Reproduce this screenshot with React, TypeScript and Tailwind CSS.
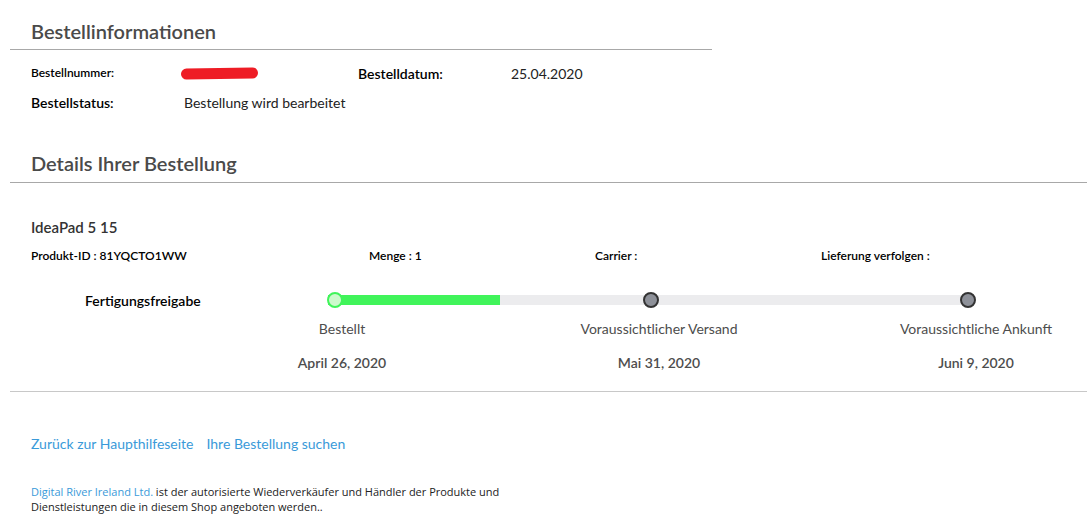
import React from 'react';

const steps = [
  { label: 'Bestellt', date: 'April 26, 2020', gap: 'ml-[232px]' },
  { label: 'Voraussichtlicher Versand', date: 'Mai 31, 2020', gap: 'ml-[97px]' },
  { label: 'Voraussichtliche Ankunft', date: 'Juni 9, 2020', gap: 'ml-[97px]' },
];

const App: React.FC = () => {
  return (
    <div className="w-[1087px] h-[523px] bg-white font-['Lato','Noto_Sans',sans-serif] text-[#222] overflow-hidden">
      {/* Bestellinformationen */}
      <div className="pt-[18px] pl-[10px] w-[712px]">
        <h2 className="pl-[21px] text-[20px] leading-[26px] font-semibold text-[#4a4a4a] pb-[5px] border-b border-[#a8a8a8]">
          Bestellinformationen
        </h2>
      </div>
      <div className="pl-[31px] pt-[13px]">
        <div className="flex items-center h-[20px]">
          <span className="w-[150px] text-[12px] font-semibold text-black">Bestellnummer:</span>
          <span className="block w-[77px] h-[11px] bg-[#ee1c25] rounded-full -rotate-1"></span>
          <span className="ml-[100px] w-[153px] text-[14px] font-semibold text-black">Bestelldatum:</span>
          <span className="text-[14px]">25.04.2020</span>
        </div>
        <div className="flex items-center h-[20px] mt-[9px]">
          <span className="w-[153px] text-[14px] font-semibold text-black">Bestellstatus:</span>
          <span className="text-[14px]">Bestellung wird bearbeitet</span>
        </div>
      </div>

      {/* Details */}
      <div className="pt-[38px] pl-[10px]">
        <h2 className="pl-[21px] text-[20px] leading-[26px] font-semibold text-[#4a4a4a] pb-[6px] border-b border-[#a8a8a8]">
          Details Ihrer Bestellung
        </h2>
      </div>

      <div className="pl-[31px] pt-[34px]">
        <div className="text-[15px] leading-[20px] font-semibold text-[#333]">IdeaPad 5 15</div>
        <div className="flex text-[12px] leading-[16px] font-semibold text-black mt-[11px]">
          <span className="w-[338px]">Produkt-ID : 81YQCTO1WW</span>
          <span className="w-[226px]">Menge : 1</span>
          <span className="w-[226px]">Carrier :</span>
          <span>Lieferung verfolgen :</span>
        </div>
      </div>

      {/* Timeline */}
      <div className="flex items-center mt-[26px] h-[20px]">
        <span className="pl-[85px] w-[328px] text-[14px] font-semibold text-black">Fertigungsfreigabe</span>
        <div className="relative w-[640px] h-[10px] bg-[#ececee]">
          <div className="absolute left-0 top-0 h-[10px] w-[172px] bg-[#40f45a]"></div>
          <span className="absolute left-[-1px] top-[-3px] w-[16px] h-[16px] rounded-full bg-[#ccfacc] border-2 border-[#40f45a]"></span>
          <span className="absolute left-[315px] top-[-3px] w-[16px] h-[16px] rounded-full bg-[#8e9199] border-2 border-[#333]"></span>
          <span className="absolute left-[632px] top-[-3px] w-[16px] h-[16px] rounded-full bg-[#8e9199] border-2 border-[#333]"></span>
        </div>
      </div>
      <div className="flex mt-[10px] text-[14px] text-[#4d4d4d]">
        {steps.map((s) => (
          <div key={s.label} className={`w-[220px] flex flex-col items-center ${s.gap}`}>
            <span className="leading-[18px]">{s.label}</span>
            <span className="mt-[16px] leading-[18px] font-semibold">{s.date}</span>
          </div>
        ))}
      </div>

      <div className="ml-[10px] mt-[19px] border-b border-[#c8c8c8]"></div>

      {/* Links */}
      <div className="pl-[31px] pt-[41px] flex gap-[13px] text-[14px] text-[#3a9ad9]">
        <a href="#">Zurück zur Haupthilfeseite</a>
        <a href="#">Ihre Bestellung suchen</a>
      </div>

      <p className="pl-[31px] pt-[30px] w-[520px] font-['Open_Sans','Lato',sans-serif] text-[11px] leading-[15px] text-[#222]">
        <span className="text-[#3a9ad9]">Digital River Ireland Ltd.</span> ist der autorisierte Wiederverkäufer und Händler der Produkte und Dienstleistungen die in diesem Shop angeboten werden..
      </p>
    </div>
  );
};

export default App;
